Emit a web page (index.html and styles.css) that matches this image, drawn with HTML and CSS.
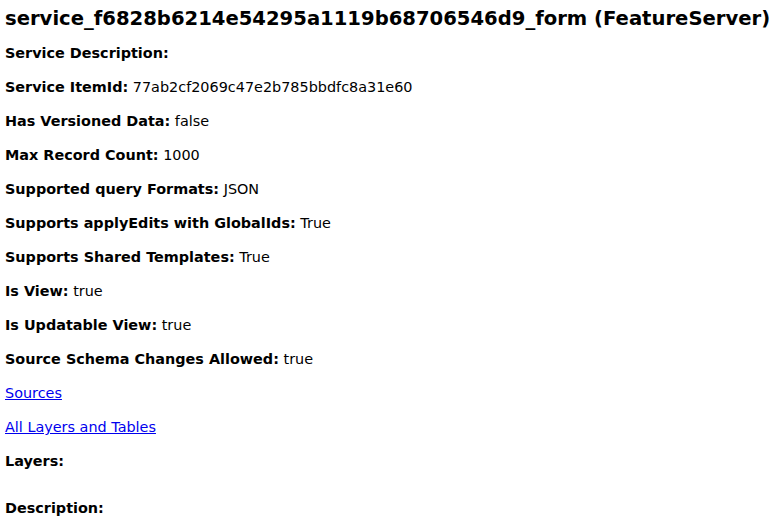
FILE: index.html
```html
<!DOCTYPE html>
<html>
<head>
<meta charset="utf-8">
<title>FeatureServer</title>
<link rel="stylesheet" href="styles.css">
</head>
<body>
<h2 class="title">service_f6828b6214e54295a1119b68706546d9_form (FeatureServer)</h2>
<div class="content">
<div class="row"><b>Service Description:</b> </div>
<div class="row"><b>Service ItemId:</b> 77ab2cf2069c47e2b785bbdfc8a31e60</div>
<div class="row"><b>Has Versioned Data:</b> false</div>
<div class="row"><b>Max Record Count:</b> 1000</div>
<div class="row"><b>Supported query Formats:</b> JSON</div>
<div class="row"><b>Supports applyEdits with GlobalIds:</b> True</div>
<div class="row"><b>Supports Shared Templates:</b> True</div>
<div class="row"><b>Is View:</b> true</div>
<div class="row"><b>Is Updatable View:</b> true</div>
<div class="row"><b>Source Schema Changes Allowed:</b> true</div>
<div class="row"><a href="#">Sources</a></div>
<div class="row"><a href="#">All Layers and Tables</a></div>
<div class="row"><b>Layers:</b></div>
<ul class="list"></ul>
<div class="row"><b>Description:</b></div>
</div>
</body>
</html>
```
FILE: styles.css
```css
html, body {
  margin: 0;
  padding: 0;
  background: #fff;
}
body {
  padding: 5px;
  font-family: "DejaVu Sans", Verdana, sans-serif;
  font-size: 14.4px;
  line-height: 17px;
  color: #000;
}
.title {
  font-size: 19.6px;
  line-height: 24px;
  font-weight: bold;
  white-space: nowrap;
  margin: 2px 0 14px 0;
}
.content {
  display: flex;
  flex-direction: column;
}
.row {
  margin-bottom: 17px;
}
.row b {
  font-weight: bold;
}
a {
  color: #0000ee;
}
.list {
  margin: 0;
  height: 13px;
  padding: 0;
}
```
